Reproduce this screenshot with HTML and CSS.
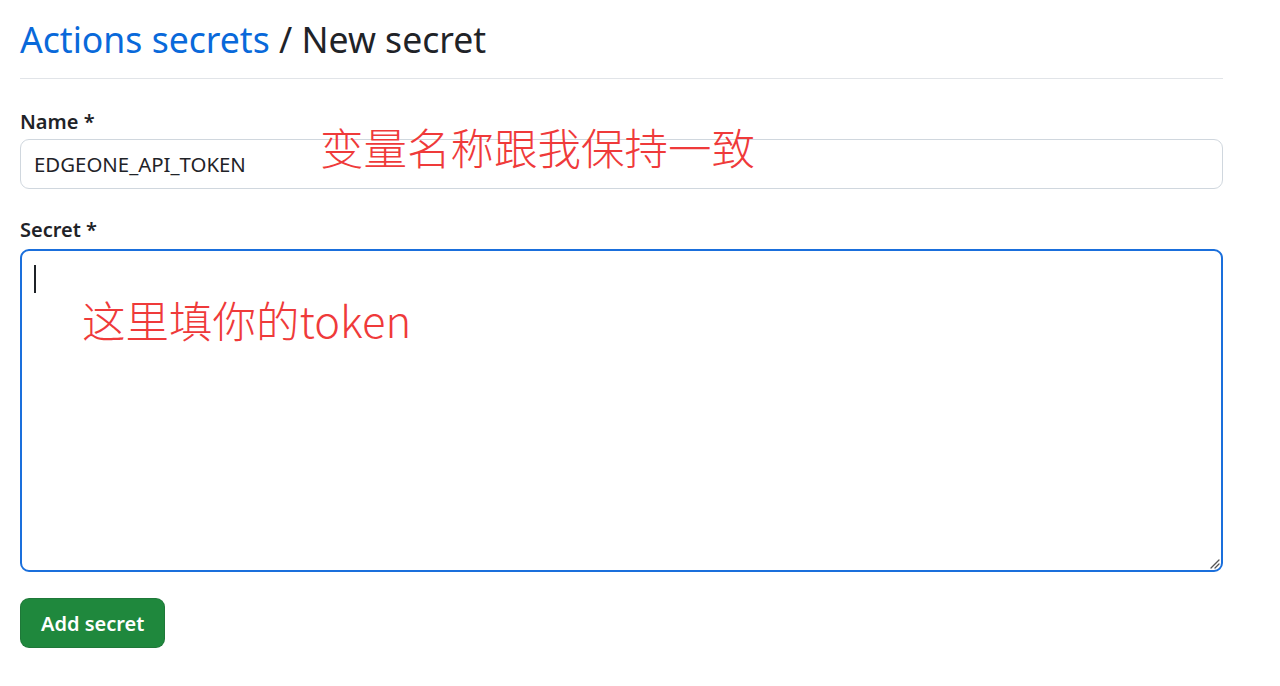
FILE: index.html
```html
<!DOCTYPE html>
<html lang="zh-CN">
<head>
<meta charset="utf-8">
<title>New secret</title>
<link rel="stylesheet" href="styles.css">
</head>
<body>
<main class="page">
  <div class="subhead">
    <h2 class="subhead-heading"><a class="crumb" href="#">Actions secrets</a> / New secret</h2>
  </div>
  <form class="secret-form">
    <div class="form-group">
      <label class="form-label" for="name">Name *</label>
      <div class="field-wrap">
        <input class="form-input" id="name" type="text" value="EDGEONE_API_TOKEN">
        <span class="note note-name">变量名称跟我保持一致</span>
      </div>
    </div>
    <div class="form-group">
      <label class="form-label label-secret" for="secret">Secret *</label>
      <div class="field-wrap">
        <div class="form-textarea" id="secret">
          <span class="caret"></span>
          <svg class="resize" width="12" height="12" viewBox="0 0 12 12" aria-hidden="true">
            <path d="M11 3 L3 11 M11 7 L7 11" stroke="#555" stroke-width="1.3" fill="none" stroke-linecap="round"/>
          </svg>
        </div>
        <span class="note note-secret">这里填你的token</span>
      </div>
    </div>
    <button class="btn-primary" type="button">Add secret</button>
  </form>
</main>
</body>
</html>
```

FILE: styles.css
```css
html, body {
  margin: 0;
  padding: 0;
  background: #ffffff;
}
body {
  font-family: "Noto Sans", "Open Sans", "Liberation Sans", sans-serif;
  color: #1f2328;
}
.page {
  width: 1203px;
  padding: 0 20px;
}
.subhead {
  border-bottom: 1px solid #e1e4e8;
  padding-top: 14px;
  padding-bottom: 14px;
}
.subhead-heading {
  margin: 0;
  font-size: 35.6px;
  font-weight: 400;
  line-height: 50px;
  color: #1f2328;
}
.crumb {
  color: #0969da;
  text-decoration: none;
}
.secret-form {
  padding-top: 28px;
}
.form-group {
  margin-bottom: 26px;
}
.form-label {
  display: block;
  font-size: 20px;
  font-weight: 600;
  line-height: 30px;
  margin-bottom: 2px;
}
.label-secret {
  margin-bottom: 4px;
}
.field-wrap {
  position: relative;
}
.form-input {
  box-sizing: border-box;
  width: 100%;
  height: 50px;
  border: 1.5px solid #d0d7de;
  border-radius: 9px;
  padding: 0 13px;
  font-family: inherit;
  font-size: 20.4px;
  color: #1f2328;
  background: #fff;
  outline: none;
}
.form-textarea {
  position: relative;
  box-sizing: border-box;
  width: 100%;
  height: 323px;
  border: 2px solid #1a6fdc;
  border-radius: 9px;
  background: #fff;
}
.caret {
  position: absolute;
  left: 12px;
  top: 14px;
  width: 2px;
  height: 28px;
  background: #1f2328;
}
.resize {
  position: absolute;
  right: 1px;
  bottom: 1px;
}
.note {
  position: absolute;
  font-family: "Noto Sans CJK SC", "Noto Sans", sans-serif;
  font-weight: 300;
  color: #ef3a3a;
  font-size: 43.5px;
  line-height: 1;
  white-space: nowrap;
}
.note-name {
  left: 300px;
  top: -14px;
}
.note-secret {
  left: 62px;
  top: 49px;
}
.btn-primary {
  display: block;
  margin-top: 0;
  height: 50px;
  padding: 0 20px;
  border: 1px solid rgba(31, 35, 40, 0.15);
  border-radius: 9px;
  background: #1f883d;
  color: #ffffff;
  font-family: inherit;
  font-size: 20px;
  font-weight: 600;
}
```
